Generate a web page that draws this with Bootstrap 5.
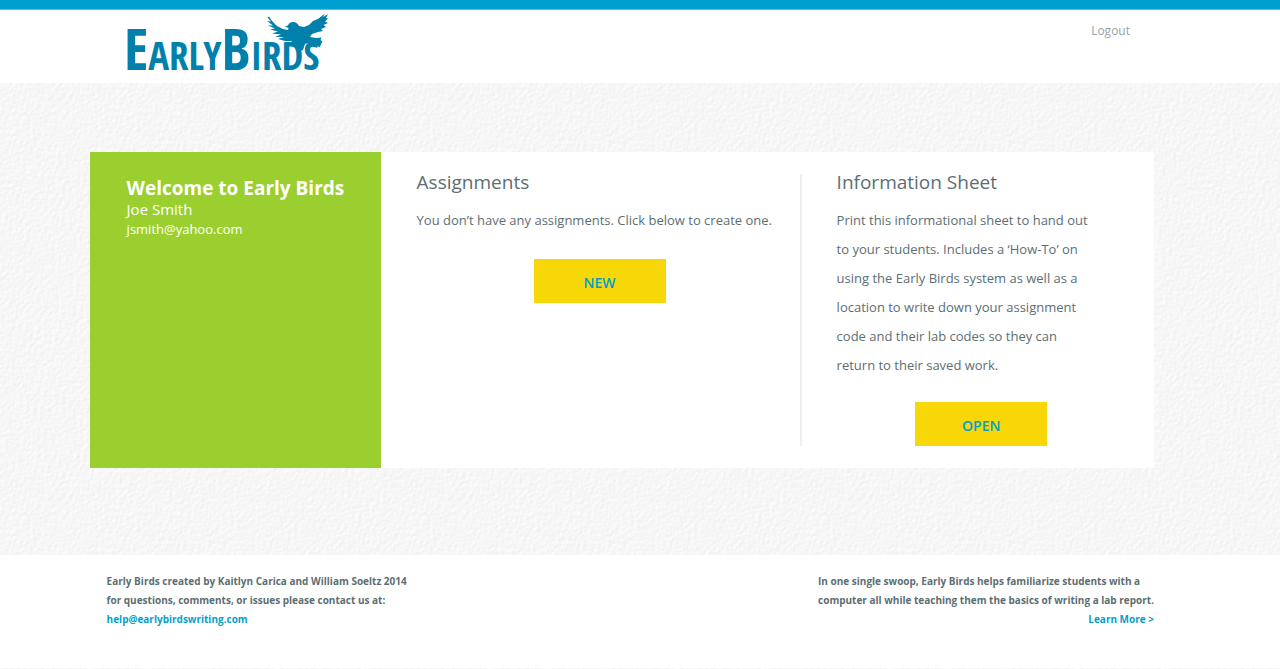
<!DOCTYPE html>
<html lang="en">
<head>
<meta charset="utf-8">
<meta name="viewport" content="width=device-width, initial-scale=1">
<title>Early Birds</title>
<link href="https://cdn.jsdelivr.net/npm/bootstrap@5.3.0/dist/css/bootstrap.min.css" rel="stylesheet">
<style>
body{
  font-family:"Open Sans","Noto Sans",sans-serif;color:#5d6e73;font-size:13px;line-height:29px;
  background:#f6f6f6 url("data:image/svg+xml,%3Csvg xmlns='http://www.w3.org/2000/svg' width='400' height='400'%3E%3Cfilter id='p' x='0' y='0' width='100%25' height='100%25' color-interpolation-filters='sRGB'%3E%3CfeTurbulence type='fractalNoise' baseFrequency='.28' numOctaves='3' seed='4' stitchTiles='stitch'/%3E%3CfeDiffuseLighting lighting-color='%23fff' surfaceScale='.13' diffuseConstant='1.095'%3E%3CfeDistantLight azimuth='225' elevation='62'/%3E%3C/feDiffuseLighting%3E%3C/filter%3E%3Crect width='400' height='400' filter='url(%23p)'/%3E%3C/svg%3E");
}
.wrap{padding-left:7%;padding-right:calc(10% - 2px)}
.top-rule{height:10px;background:#009fd1;border-bottom:1px solid #55bfe5}
.head-row{min-height:73px}
.logo{width:212px;height:64px;margin-left:30px}
.logo text{font-family:"Open Sans Condensed","Open Sans",sans-serif;font-weight:700;font-size:39px}
.logo .cap{font-size:57px}
.logout{color:#95a3a6;font-size:12px;line-height:20px;margin:11px 24px 0 0}
.stage{padding-top:69px;padding-bottom:87px}
.welcome{background:#9bcf30;width:291px;padding:26px 37px}
.welcome h1{font-size:19px;line-height:21px;font-weight:700}
.user-name{font-size:15px;line-height:20px}
.user-mail{font-size:13px;line-height:20px;font-weight:500}
.panels{padding:22px 0}
.panel-title{font-size:19px;line-height:16px;font-weight:400}
.assignments{flex:0 1 421px;padding:0 17px 0 36px;border-right:2px solid #efefef}
.info{flex:1 1 340px;padding:0 28px 0 35px}
.info p{max-width:256px;margin-bottom:22px}
.btn-bird,.btn-bird:hover{background:#f7d708;color:#00a0c8;width:132px;height:44px;padding-top:9px;font-weight:600;font-size:14px;border-radius:0;border:0}
.site-foot{font-size:10px;line-height:19px;font-weight:700;min-height:113px}
.site-foot .wrap{padding-top:17px}
.site-foot a{color:#069fc8}
.foot-left{padding-left:17px}
</style>
</head>
<body>
<header class="bg-white">
  <div class="top-rule"></div>
  <div class="wrap head-row d-flex justify-content-between align-items-start">
    <a href="#" aria-label="Early Birds home"><svg class="logo d-block overflow-visible" viewBox="120 10 212 64" fill="#0080ab">
      <text x="124" y="70"><tspan class="cap">E</tspan>ARLY<tspan class="cap">B</tspan>IRDS</text>
      <path d="M269 16.500L272 21 277 26 283 29 288 30 288.500 28 285 26.500 288 25.500Q289 22 293 22 297 22 299 26L304 27 309 25 313 21 318 19 325 13.500 323 17 328 14 326 18 328 18.500 325 21.500 328 23 323.500 25 326 27 321 29 323 31 318 32 312 34 310 37 316 38 321.500 37.500 320.500 40 322.500 41.500 321 44 320 47 315 46 309 43 305 44 303 50 297 52 296 45 291 41 285 41 278 39 284 37 275 37 281 34.500 272 33.500 278 31.500 270 29.500 275 28.500 268 25.500 273 25.500 267 21 271 21.500 267.500 17.500Z"/>
    </svg></a>
    <a class="logout text-decoration-none" href="#">Logout</a>
  </div>
</header>
<main class="wrap stage">
  <div class="d-flex bg-white">
    <aside class="welcome flex-shrink-0 text-white">
      <h1 class="mb-0 text-nowrap">Welcome to Early Birds</h1>
      <div class="user-name">Joe Smith</div>
      <div class="user-mail">jsmith@yahoo.com</div>
    </aside>
    <div class="panels d-flex flex-grow-1">
      <section class="assignments">
        <h2 class="panel-title mb-3">Assignments</h2>
        <p class="mb-4">You don’t have any assignments. Click below to create one.</p>
        <div class="d-flex justify-content-center"><button type="button" class="btn btn-bird">NEW</button></div>
      </section>
      <section class="info">
        <h2 class="panel-title mb-3">Information Sheet</h2>
        <p>Print this informational sheet to hand out to your students. Includes a ‘How-To’ on using the Early Birds system as well as a location to write down your assignment code and their lab codes so they can return to their saved work.</p>
        <div class="d-flex justify-content-center"><button type="button" class="btn btn-bird">OPEN</button></div>
      </section>
    </div>
  </div>
</main>
<footer class="site-foot bg-white">
  <div class="wrap d-flex justify-content-between">
    <div class="foot-left">
      <p class="mb-0">Early Birds created by Kaitlyn Carica and William Soeltz 2014</p>
      <p class="mb-0">for questions, comments, or issues please contact us at:</p>
      <a class="text-decoration-none" href="#">help@earlybirdswriting.com</a>
    </div>
    <div>
      <p class="mb-0">In one single swoop, Early Birds helps familiarize students with a</p>
      <p class="mb-0">computer all while teaching them the basics of writing a lab report.</p>
      <p class="text-end mb-0"><a class="text-decoration-none" href="#">Learn More &gt;</a></p>
    </div>
  </div>
</footer>
<script src="https://cdn.jsdelivr.net/npm/bootstrap@5.3.0/dist/js/bootstrap.bundle.min.js"></script>
</body>
</html>
